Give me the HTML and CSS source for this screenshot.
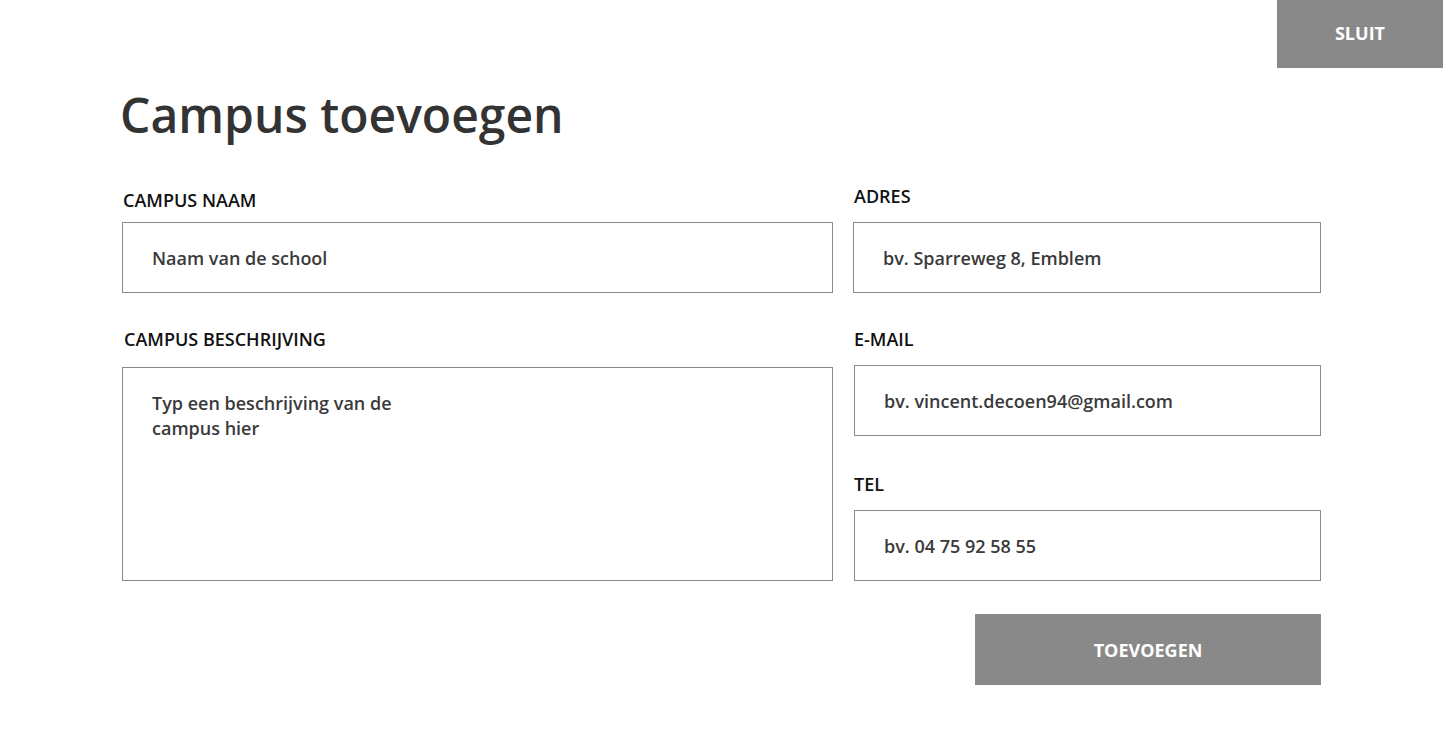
FILE: index.html
```html
<!DOCTYPE html>
<html lang="nl">
<head>
<meta charset="utf-8">
<title>Campus toevoegen</title>
<link rel="stylesheet" href="styles.css">
</head>
<body>
<div class="topbar">
  <button class="btn btn-close" type="button">SLUIT</button>
</div>
<main class="page">
  <h1 class="title">Campus toevoegen</h1>
  <div class="form">
    <div class="col col-left">
      <div class="field field-name">
        <div class="label">CAMPUS NAAM</div>
        <div class="box">Naam van de school</div>
      </div>
      <div class="field field-desc">
        <div class="label">CAMPUS BESCHRIJVING</div>
        <div class="box box-area">Typ een beschrijving van de<br>campus hier</div>
      </div>
    </div>
    <div class="col col-right">
      <div class="field field-adres">
        <div class="label">ADRES</div>
        <div class="box">bv. Sparreweg 8, Emblem</div>
      </div>
      <div class="field field-mail">
        <div class="label">E-MAIL</div>
        <div class="box">bv. vincent.decoen94@gmail.com</div>
      </div>
      <div class="field field-tel">
        <div class="label">TEL</div>
        <div class="box">bv. 04 75 92 58 55</div>
      </div>
      <div class="actions">
        <button class="btn btn-add" type="button">TOEVOEGEN</button>
      </div>
    </div>
  </div>
</main>
</body>
</html>
```

FILE: styles.css
```css
* { box-sizing: border-box; }
html, body {
  margin: 0;
  padding: 0;
  background: #ffffff;
  font-family: "Open Sans", "Noto Sans", sans-serif;
  color: #333333;
}
.topbar {
  display: flex;
  justify-content: flex-end;
  height: 68px;
}
.btn {
  border: 0;
  background: #898989;
  color: #ffffff;
  font-family: "Open Sans", "Noto Sans", sans-serif;
  font-weight: 700;
  font-size: 18px;
  cursor: pointer;
  padding: 0;
}
.btn-close {
  width: 166px;
  height: 68px;
  padding-bottom: 2px;
}
.page {
  padding-left: 120px;
}
.title {
  margin: 14px 0 0 0;
  font-size: 48px;
  font-weight: 600;
  line-height: 65px;
  color: #333333;
}
.form {
  display: flex;
  gap: 20px;
  margin-top: 38px;
  padding-left: 2px;
}
.col { display: flex; flex-direction: column; }
.col-left { width: 711px; padding-top: 4px; }
.col-right { width: 468px; }
.label {
  font-size: 18px;
  font-weight: 600;
  line-height: 22px;
  color: #111111;
  padding-left: 1px;
}
.box {
  border: 1px solid #8a8a8a;
  height: 71px;
  padding-left: 29px;
  display: flex;
  align-items: center;
  font-size: 18px;
  font-weight: 600;
  color: #3a3a3a;
}
.field-name .label { margin-bottom: 11px; }
.field-desc { margin-top: 35px; }
.field-desc .label { margin-bottom: 17px; padding-left: 2px; }
.box-area {
  height: 214px;
  display: block;
  padding-top: 23px;
  line-height: 25px;
}
.field-adres .label { margin-bottom: 15px; }
.field-mail { margin-top: 35px; margin-left: 1px; }
.field-mail .label { margin-bottom: 15px; padding-left: 0; }
.field-tel { margin-top: 37px; margin-left: 1px; }
.field-tel .label { margin-bottom: 15px; padding-left: 0; }
.actions {
  display: flex;
  justify-content: flex-end;
  margin-top: 33px;
}
.btn-add {
  width: 346px;
  height: 71px;
}
```
